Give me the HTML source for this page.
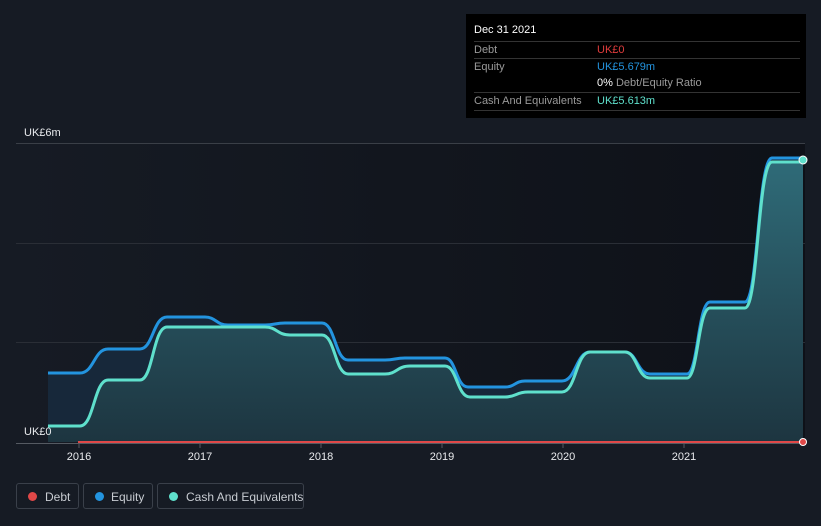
<!DOCTYPE html><html><head><style>body{margin:0;background:#161b24;font-family:"Liberation Sans",sans-serif;width:821px;height:526px;overflow:hidden}
.t{position:absolute;left:466px;top:14px;width:340px;height:104px;background:#000;color:#fff;font-size:11px}
.r{position:absolute;left:8px;width:326px;border-top:1px solid #333;height:17px;line-height:17px}
.g{color:#9a9a9a}.v{position:absolute;left:123px}
.lg{position:absolute;top:483px;height:26px;border:1px solid #3a404a;border-radius:3px;color:#c8ccd2;font-size:12px;line-height:26px;box-sizing:border-box;white-space:nowrap}
.lg i{position:absolute;left:11px;top:8px;width:9px;height:9px;border-radius:50%}
</style></head><body>
<svg width="821" height="526" style="position:absolute;left:0;top:0">
<defs><linearGradient id="gr" x1="0" y1="0" x2="0" y2="1"><stop offset="0" stop-color="#2f6b78"/><stop offset="1" stop-color="#1d3540"/></linearGradient>
<linearGradient id="bg" x1="0" y1="0" x2="1" y2="0"><stop offset="0" stop-color="#161b24"/><stop offset="1" stop-color="#0e1118"/></linearGradient></defs>
<rect x="16" y="143" width="789" height="300" fill="url(#bg)"/>
<line x1="16" y1="143.5" x2="805" y2="143.5" stroke="#3a3f47"/>
<line x1="16" y1="243.5" x2="805" y2="243.5" stroke="#2a2e36"/>
<line x1="16" y1="342.5" x2="805" y2="342.5" stroke="#2a2e36"/>
<path d="M48,373 L80,373 C94,373 94,349 108,349 L140,349 C153,349 153,317 167,317 L205,317 C216,317 216,325 228,325 L265,325 C275,325 275,323 285,323 L322,323 C335,323 335,360 348,360 L385,360 C395,360 395,358 405,358 L445,358 C456,358 456,387 468,387 L505,387 C515,387 515,381 525,381 L562,381 C576,381 576,352 590,352 L625,352 C637,352 637,374 650,374 L687,374 C698,374 698,302 710,302 L745,302 C758,302 758,158 772,158 L803,158 L803,442 L48,442Z" fill="#17283a"/>
<path d="M48,426 L80,426 C94,426 94,380 108,380 L140,380 C153,380 153,327 167,327 L265,327 C277,327 277,335 290,335 L322,335 C335,335 335,374 348,374 L385,374 C397,374 397,366 410,366 L445,366 C457,366 457,397 470,397 L505,397 C516,397 516,392 528,392 L562,392 C576,392 576,352 590,352 L625,352 C637,352 637,378 650,378 L687,378 C698,378 698,308 710,308 L745,308 C758,308 758,162 772,162 L803,162 L803,442 L48,442Z" fill="url(#gr)"/>
<path d="M48,373 L80,373 C94,373 94,349 108,349 L140,349 C153,349 153,317 167,317 L205,317 C216,317 216,325 228,325 L265,325 C275,325 275,323 285,323 L322,323 C335,323 335,360 348,360 L385,360 C395,360 395,358 405,358 L445,358 C456,358 456,387 468,387 L505,387 C515,387 515,381 525,381 L562,381 C576,381 576,352 590,352 L625,352 C637,352 637,374 650,374 L687,374 C698,374 698,302 710,302 L745,302 C758,302 758,158 772,158 L803,158" fill="none" stroke="#2394df" stroke-width="3"/>
<path d="M48,426 L80,426 C94,426 94,380 108,380 L140,380 C153,380 153,327 167,327 L265,327 C277,327 277,335 290,335 L322,335 C335,335 335,374 348,374 L385,374 C397,374 397,366 410,366 L445,366 C457,366 457,397 470,397 L505,397 C516,397 516,392 528,392 L562,392 C576,392 576,352 590,352 L625,352 C637,352 637,378 650,378 L687,378 C698,378 698,308 710,308 L745,308 C758,308 758,162 772,162 L803,162" fill="none" stroke="#5fe0cc" stroke-width="3"/>
<line x1="16" y1="443.5" x2="805" y2="443.5" stroke="#555a62"/>
<line x1="78" y1="442" x2="803" y2="442" stroke="#e04848" stroke-width="2"/>
<circle cx="803" cy="442" r="3.5" fill="#e04848" stroke="#fff" stroke-width="1"/>
<circle cx="803" cy="160" r="4" fill="#5fe0cc" stroke="#fff" stroke-width="1"/>
<g stroke="#555a62"><line x1="79" y1="443" x2="79" y2="448"/><line x1="200" y1="443" x2="200" y2="448"/><line x1="321" y1="443" x2="321" y2="448"/><line x1="442" y1="443" x2="442" y2="448"/><line x1="563" y1="443" x2="563" y2="448"/><line x1="684" y1="443" x2="684" y2="448"/></g>
<g fill="#e8eaed" font-size="11" font-family="Liberation Sans" text-anchor="middle"><text x="79" y="460">2016</text><text x="200" y="460">2017</text><text x="321" y="460">2018</text><text x="442" y="460">2019</text><text x="563" y="460">2020</text><text x="684" y="460">2021</text></g>
<text x="24" y="136" fill="#e8eaed" font-size="11">UK£6m</text>
<text x="24" y="435" fill="#e8eaed" font-size="11">UK£0</text>
</svg>
<div class="t">
<div style="position:absolute;left:8px;top:10px">Dec 31 2021</div>
<div class="r" style="top:27px"><span class="g">Debt</span><span class="v" style="color:#e03c3c">UK£0</span></div>
<div class="r" style="top:44px"><span class="g">Equity</span><span class="v" style="color:#2394df">UK£5.679m</span></div>
<div class="r" style="top:61px;border:0"><span class="v"><b style="font-weight:normal;color:#fff">0%</b> <span class="g">Debt/Equity Ratio</span></span></div>
<div class="r" style="top:78px"><span class="g">Cash And Equivalents</span><span class="v" style="color:#5fe0cc">UK£5.613m</span></div>
<div class="r" style="top:96px;height:0"></div>
</div>
<div class="lg" style="left:16px;width:63px"><i style="background:#e04848"></i><span style="position:absolute;left:28px">Debt</span></div>
<div class="lg" style="left:83px;width:70px"><i style="background:#2394df"></i><span style="position:absolute;left:27px">Equity</span></div>
<div class="lg" style="left:157px;width:147px"><i style="background:#5fe0cc"></i><span style="position:absolute;left:28px">Cash And Equivalents</span></div>
</body></html>
